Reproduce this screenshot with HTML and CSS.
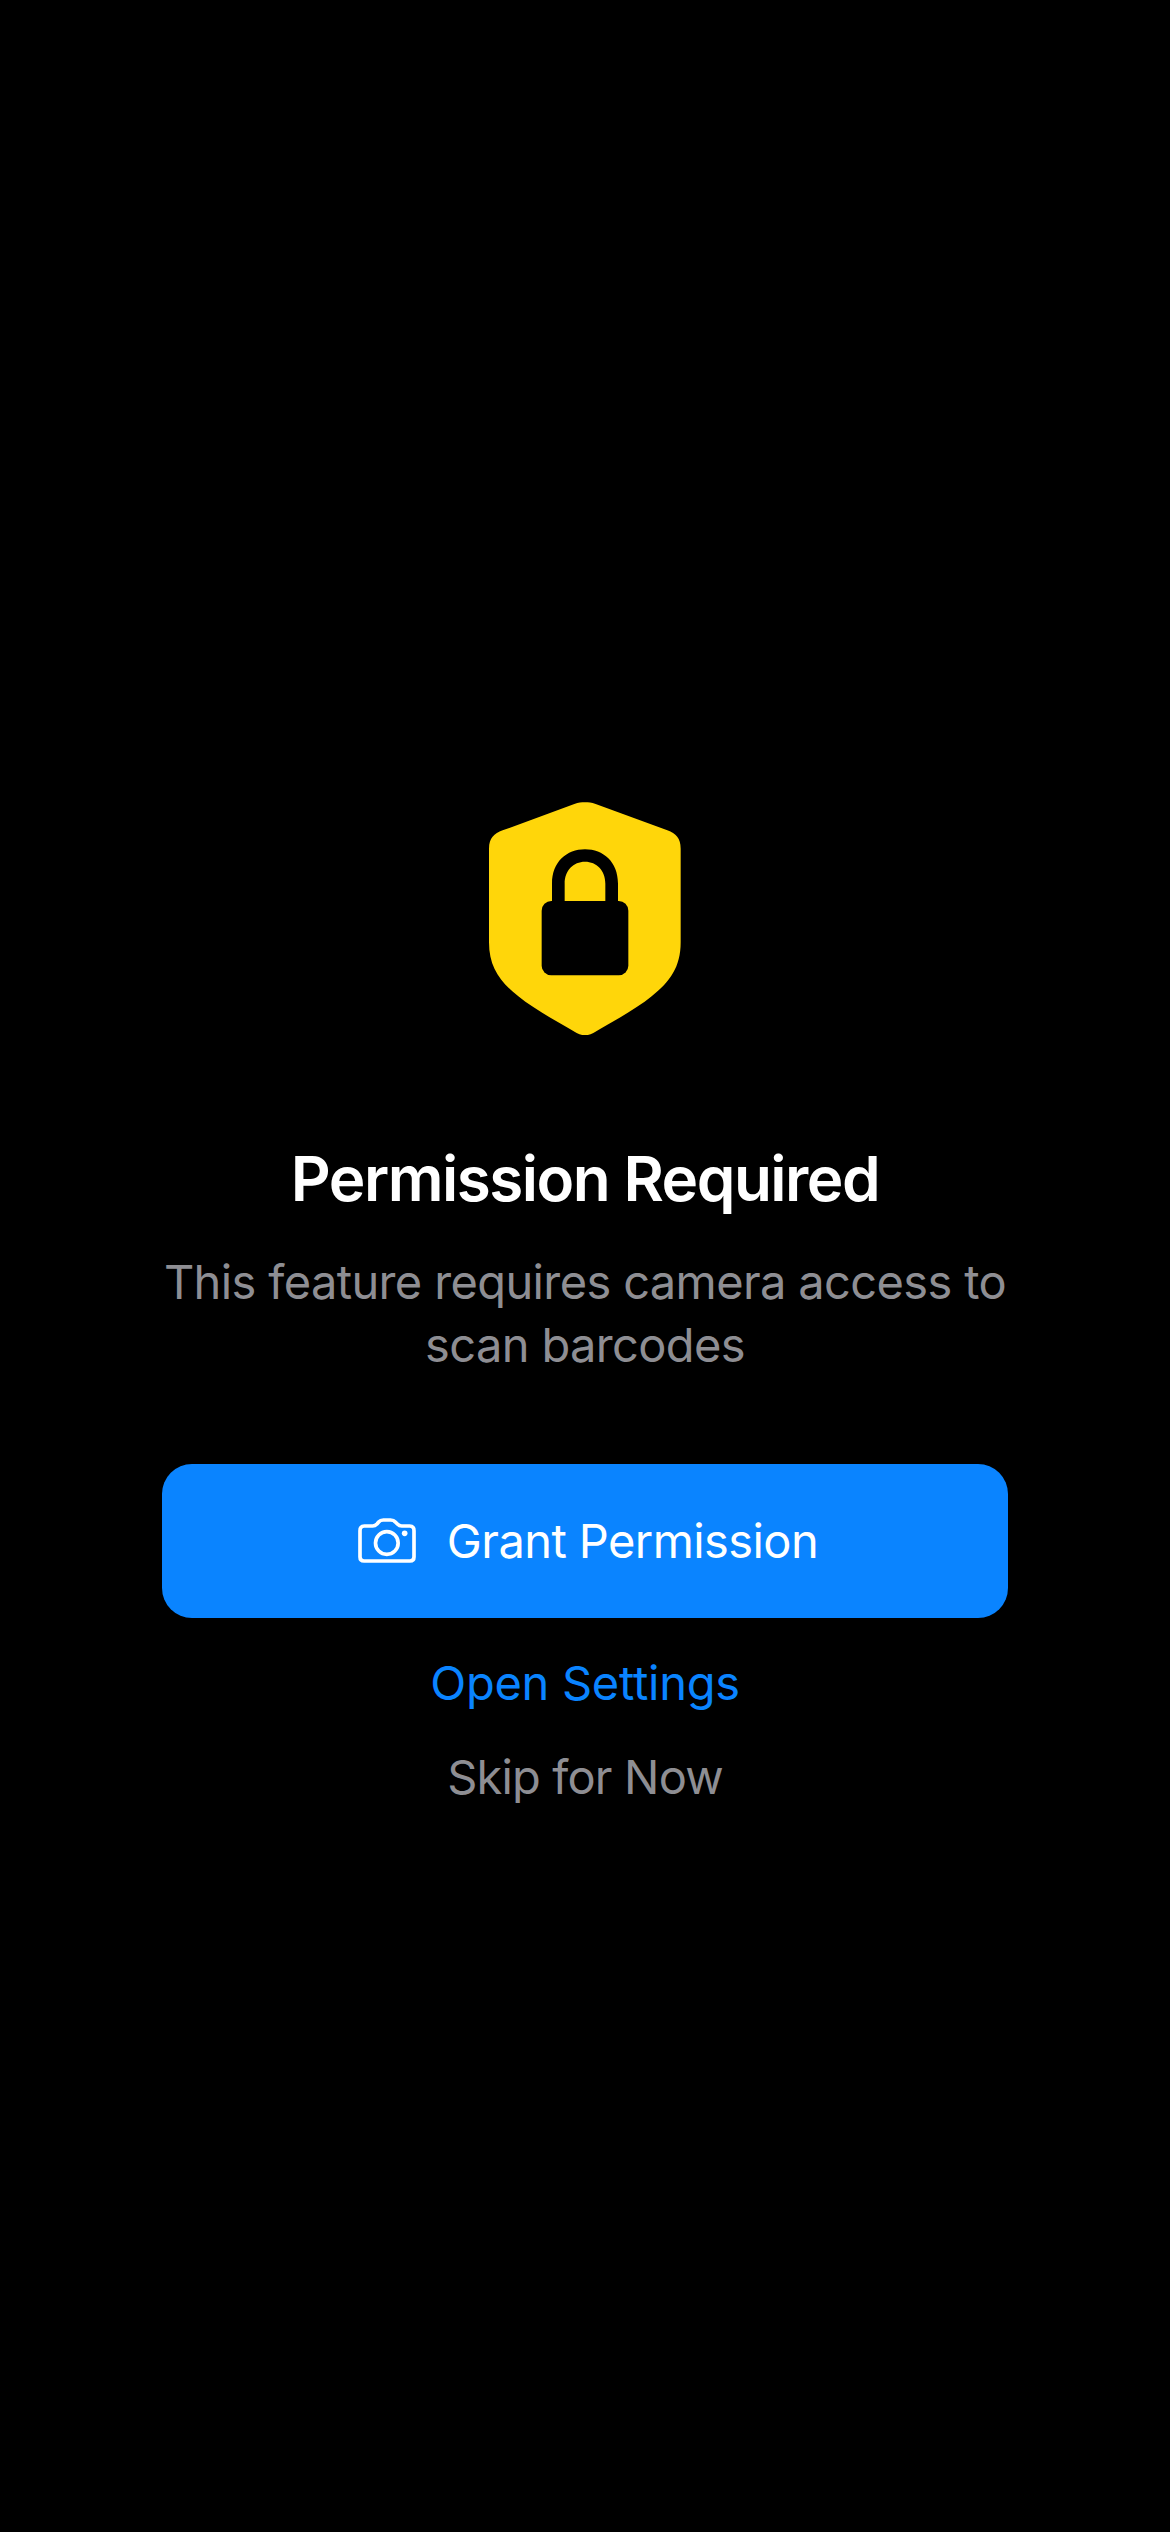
FILE: index.html
```html
<!DOCTYPE html>
<html lang="en">
<head>
<meta charset="utf-8">
<title>Permission Required</title>
<link rel="stylesheet" href="styles.css">
</head>
<body>
<main class="screen">
  <svg class="shield" viewBox="57 65 576 701" aria-hidden="true">
    <path fill="#ffd60a" d="M345 65.5C356 65.5 364 66 377 71L592 150C618 160 632 173 632 205V486C632 560 600 605 545 648C500 685 430 723 370 758C353 767 337 767 320 758C260 723 190 685 145 648C90 605 57 560 57 486V205C57 173 72 160 98 150L313 71C326 66 334 65.5 345 65.5Z"/>
    <path d="M246 365V310C246 245 290 207 345 207S444 245 444 310V365H406V310C406 270 380 244 345 244S284 270 284 310V365Z"/>
    <rect x="215" y="362" width="260" height="223" rx="29"/>
  </svg>
  <h1 class="title">Permission Required</h1>
  <p class="message">This feature requires camera access to scan barcodes</p>
  <button class="button primary">
    <svg class="camera" viewBox="54 54 174 135" aria-hidden="true">
      <path d="M72 183H210Q222 183 222 171V92Q222 78 209 78H185Q178 78 172 72L166 66Q161 60 152 60H130Q121 60 116 66L111 72Q105 78 98 78H73Q60 78 60 92V171Q60 183 72 183Z"/>
      <circle cx="140.5" cy="129" r="34"/>
      <circle class="dot" cx="194" cy="100" r="8.5"/>
    </svg>
    <span>Grant Permission</span>
  </button>
  <button class="button link">Open Settings</button>
  <button class="button skip">Skip for Now</button>
</main>
</body>
</html>
```
FILE: styles.css
```css
* {
  box-sizing: border-box;
}

body {
  margin: 0;
  background: #000;
  font-family: Inter, "Liberation Sans", sans-serif;
}

.screen {
  display: flex;
  flex-direction: column;
  align-items: center;
  min-height: 2532px;
  padding: 801.7px 162px 0;
}

.shield {
  width: 192px;
  height: 233.7px;
}

.title {
  margin: 104.6px 0 0;
  color: #fff;
  font-size: 62px;
  font-weight: 600;
  line-height: 78px;
  letter-spacing: -1.5px;
}

.message {
  margin: 32px 0 0;
  color: #8e8e93;
  font-size: 47px;
  line-height: 63px;
  letter-spacing: -0.63px;
  text-align: center;
}

.button {
  padding: 0;
  border: 0;
  background: none;
  font: 47px/57px Inter, "Liberation Sans", sans-serif;
}

.primary {
  display: flex;
  align-items: center;
  justify-content: center;
  gap: 31px;
  width: 846px;
  height: 154px;
  margin-top: 88px;
  padding-left: 6px;
  border-radius: 30px;
  background: #0a84ff;
  color: #fff;
  letter-spacing: -0.58px;
}

.camera {
  width: 58px;
  height: 45px;
  fill: none;
  stroke: #fff;
  stroke-width: 11;
  stroke-linejoin: round;
}

.dot {
  fill: #fff;
  stroke: none;
}

.link {
  margin-top: 36px;
  color: #0a84ff;
  letter-spacing: -0.27px;
}

.skip {
  margin-top: 37px;
  color: #8e8e93;
  letter-spacing: -0.84px;
}
```
